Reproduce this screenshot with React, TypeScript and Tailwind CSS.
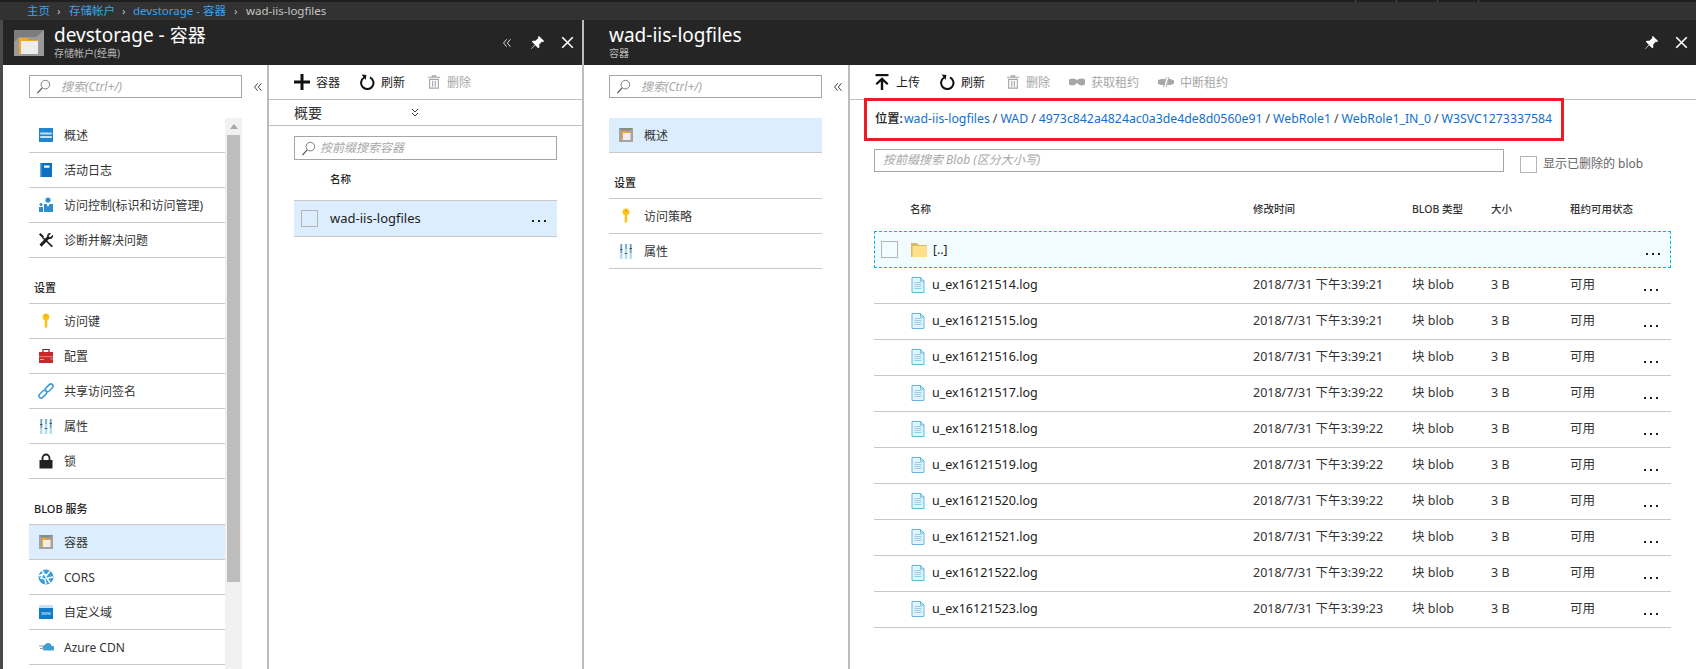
import type { ReactNode } from "react";

const files = [
  ["u_ex16121514.log", "3:39:21"],
  ["u_ex16121515.log", "3:39:21"],
  ["u_ex16121516.log", "3:39:21"],
  ["u_ex16121517.log", "3:39:22"],
  ["u_ex16121518.log", "3:39:22"],
  ["u_ex16121519.log", "3:39:22"],
  ["u_ex16121520.log", "3:39:22"],
  ["u_ex16121521.log", "3:39:22"],
  ["u_ex16121522.log", "3:39:22"],
  ["u_ex16121523.log", "3:39:23"],
];

function Svg({ children, className = "h-4 w-4" }: { children: ReactNode; className?: string }) {
  return (
    <svg viewBox="0 0 16 16" className={`flex-none ${className}`}>
      {children}
    </svg>
  );
}

function SearchIcon() {
  return (
    <Svg className="h-[15px] w-[15px]">
      <circle cx="10" cy="6" r="4.6" fill="none" stroke="#777" strokeWidth="1" />
      <path d="M6.6 9.4 1.5 15" stroke="#555" strokeWidth="1.3" />
    </Svg>
  );
}

function DoubleLeft({ color = "#444" }: { color?: string }) {
  return (
    <Svg className="h-[10px] w-[10px]">
      <path d="M7.5 2 2.5 8l5 6M13.5 2l-5 6 5 6" fill="none" stroke={color} strokeWidth="1.6" />
    </Svg>
  );
}

function PinIcon() {
  return (
    <Svg className="h-[15px] w-[15px]">
      <path d="M9.5 1 15 6.5 13.8 7.6 12.8 7 9.8 10.2 10 13 8.8 14 5.6 10.8 1.3 15 1 14.7 5.2 10.4 2 7.2 3 6 5.8 6.2 9 3.2 8.4 2.2Z" fill="#fff" />
    </Svg>
  );
}

function CloseIcon() {
  return (
    <Svg className="h-[13px] w-[13px]">
      <path d="M1.5 1.5 14.5 14.5M14.5 1.5 1.5 14.5" stroke="#fff" strokeWidth="2" />
    </Svg>
  );
}

function PlusIcon() {
  return (
    <Svg>
      <path d="M6.5 0h3v6.5H16v3H9.500v6.500h-3V9.500H0v-3h6.500Z" fill="#111" />
    </Svg>
  );
}

function RefreshIcon() {
  return (
    <Svg>
      <path d="M5.200 3.500A6.200 6.200 0 1 0 11 3.300" fill="none" stroke="#111" strokeWidth="2" />
      <path d="M2.600 0.500 7.400 1 6.600 6Z" fill="#111" />
    </Svg>
  );
}

function TrashIcon() {
  return (
    <Svg className="h-[14px] w-[14px]">
      <path d="M1 2.500h14M6 2.500V1h4v1.500" fill="none" stroke="#a6a6a6" strokeWidth="1.200" />
      <path d="M3 5h10v10H3ZM6.500 6.500v7M9.500 6.500v7" fill="none" stroke="#a6a6a6" strokeWidth="1.300" />
    </Svg>
  );
}

function UploadIcon() {
  return (
    <Svg>
      <path d="M1.500 0h13v2.200h-13Z" fill="#111" />
      <path d="M8 3.200 14.500 9.600 13 11.100 9.200 7.400V16H6.800V7.400L3 11.100 1.500 9.600Z" fill="#111" />
    </Svg>
  );
}

function LeaseIcon() {
  return (
    <Svg>
      <path d="M0 5.500 3 4.500 6.500 5 8 6.500 9.500 5 13 4.500 16 5.500V10.500L13 11.500 10.500 11 8 9 5.500 11 3 11.500 0 10.500Z" fill="#a6a6a6" />
    </Svg>
  );
}

function BreakLeaseIcon() {
  return (
    <Svg>
      <path d="M0 6 3.500 5H7V11H3.500L0 10ZM10 5H12.500L16 6.500V9.500L12.500 11H9Z" fill="#a6a6a6" />
      <path d="M5.500 13 8.500 3M8 13 11 3" stroke="#a6a6a6" strokeWidth="0.900" />
    </Svg>
  );
}

function ContainerIcon() {
  return (
    <Svg>
      <path d="M1 1h14v14H1Z" fill="#a3a3a3" />
      <path d="M1 1h14L12 3.500H3.500Z" fill="#8a8a8a" />
      <path d="M4 4h3.500l.5 1H12.500v8H4Z" fill="#f6a623" />
      <path d="M5 6h7.500v7H5Z" fill="#eeeeee" />
    </Svg>
  );
}

function OverviewIcon() {
  return (
    <Svg>
      <path d="M1 1h14v14H1Z" fill="#1f86cf" />
      <path d="M2.200 5.500h11.600v2H2.200ZM2.200 9h11.600v2H2.200Z" fill="#bfe3f7" />
    </Svg>
  );
}

function LogIcon() {
  return (
    <Svg>
      <path d="M2 1h12v14H2Z" fill="#0d6fbf" />
      <path d="M2 1h1.500v14H2Z" fill="#5ba9dd" />
      <path d="M6 3.500h5.500v2.200H6Z" fill="#fff" />
    </Svg>
  );
}

function AccessIcon() {
  return (
    <Svg>
      <circle cx="10" cy="3" r="2.600" fill="#2b8fd0" />
      <path d="M6 7h2.500l1.500 3 1.500-3H15v8H6Z" fill="#2b8fd0" />
      <circle cx="3" cy="7.500" r="1.500" fill="#2b8fd0" />
      <path d="M1 10h4v5H1Z" fill="#2b8fd0" />
    </Svg>
  );
}

function ToolsIcon() {
  return (
    <Svg>
      <path d="M2.500 1 6 4.500 4.500 6 1 2.500Z M5 5 15 14l-1.200 1.200L4 6Z" fill="#1d1d1d" />
      <path d="M14.800 2.800 12 5.500 10.500 4 13 1.200C11 .4 8.800 2 9.200 4.500L1.500 12.500 3.500 14.800 11 7c2.500.6 4.700-1.800 3.800-4.200Z" fill="#1d1d1d" />
    </Svg>
  );
}

function KeyIcon() {
  return (
    <Svg>
      <path d="M8 0.500c2.200 0 3.500 1.600 3.500 3.400 0 1.400-.9 2.700-2.200 3.200V13l-1.300 2.500L6.700 14V7.100C5.400 6.600 4.500 5.300 4.500 3.900 4.500 2.100 5.800.5 8 .5Z" fill="#fcc419" />
      <circle cx="8" cy="3" r="0.900" fill="#e69f00" />
    </Svg>
  );
}

function ToolboxIcon() {
  return (
    <Svg>
      <path d="M5 4V1.500h6V4" fill="none" stroke="#7b2020" strokeWidth="1.200" />
      <path d="M1 4h14v11H1Z" fill="#c8282c" />
      <path d="M1 8h14v1.200H1Z" fill="#e9785a" />
      <path d="M2 11h4v1H2Z" fill="#f4b183" />
      <path d="M12.500 10h2v2h-2Z" fill="#8d7fd4" />
    </Svg>
  );
}

function LinkIcon() {
  return (
    <Svg>
      <g fill="none" stroke="#3a9bd5" strokeWidth="1.500">
        <rect x="-4.500" y="-2.200" width="9" height="4.400" rx="2.200" transform="translate(4.800 11.200) rotate(-45)" />
        <rect x="-4.500" y="-2.200" width="9" height="4.400" rx="2.200" transform="translate(11.200 4.800) rotate(-45)" />
      </g>
    </Svg>
  );
}

function SlidersIcon() {
  return (
    <Svg>
      <path d="M2 1h2.500v15H2ZM6.800 1h2.500v15H6.800ZM11.500 1H14v15h-2.500Z" fill="#b3dcef" />
      <path d="M3.250 1v9M8 1v5M12.750 1v9" stroke="#4a7f9e" strokeWidth="0.900" />
      <path d="M2 6h2.500v1H2ZM6.800 10h2.500v1H6.800ZM11.500 5h2.500v1h-2.500Z" fill="#39576b" />
    </Svg>
  );
}

function LockIcon() {
  return (
    <Svg>
      <path d="M4.500 7V5a3.500 3.500 0 0 1 7 0v2" fill="none" stroke="#222" strokeWidth="1.800" />
      <path d="M1.500 7h13v8.500h-13Z" fill="#222" />
    </Svg>
  );
}

function CorsIcon() {
  return (
    <Svg>
      <circle cx="8" cy="8" r="7.500" fill="#3a9fd6" />
      <path d="M4 1.500 12 14M12 2 9 6 5 5 3 9l4 1 1 5M1 7l4-2M10 9l5-1" stroke="#fff" strokeWidth="1.500" fill="none" />
    </Svg>
  );
}

function DomainIcon() {
  return (
    <Svg>
      <path d="M1 1h14v14H1Z" fill="#0f7ccb" />
      <path d="M1 1h14v3H1Z" fill="#c7e3f5" />
      <text x="8" y="11" textAnchor="middle" fontSize="4.500" fill="#d6ecfa" fontFamily="Liberation Sans">
        www
      </text>
    </Svg>
  );
}

function CdnIcon() {
  return (
    <Svg>
      <path d="M6 11.500a3 3 0 0 1 .800-5.500 3.800 3.800 0 0 1 7 1 2.300 2.300 0 0 1 1 4.500Z" fill="#3a9fd6" />
      <path d="M1 7h6M2 9.500h5" stroke="#9a9a9a" strokeWidth="1.200" />
    </Svg>
  );
}

function FileIcon() {
  return (
    <Svg className="h-[16px] w-[16px]">
      <path d="M2 .5h8.500L14 4v11.500H2Z" fill="#e4f3fa" stroke="#63b9de" />
      <path d="M10.500.5V4H14" fill="none" stroke="#63b9de" />
      <path d="M4.500 5.500h7M4.500 7.500h7M4.500 9.500h7M4.500 11.500h7" stroke="#8cc9e4" strokeWidth="0.900" />
    </Svg>
  );
}

function FolderIcon() {
  return (
    <Svg className="h-[16px] w-[16px]">
      <path d="M0 1h6l2 2h8v12H0Z" fill="#d9b866" />
      <path d="M1.500 4H16v11H1.500Z" fill="#ffe08a" />
    </Svg>
  );
}

function Dots() {
  return (
    <span className="flex gap-[4px]">
      <i className="h-[2px] w-[2px] bg-[#222]" />
      <i className="h-[2px] w-[2px] bg-[#222]" />
      <i className="h-[2px] w-[2px] bg-[#222]" />
    </span>
  );
}

function Checkbox({ className = "" }: { className?: string }) {
  return <span className={`block h-[17px] w-[17px] flex-none border border-[#b5b5b5] ${className}`} />;
}

function BladeHeader({ title, sub, icon, actions }: { title: ReactNode; sub: string; icon?: ReactNode; actions: ReactNode }) {
  return (
    <div className="flex h-[45px] flex-none items-center bg-[#252525]">
      {icon}
      <div className="flex-1 pb-[3px] text-white">
        <div className="text-[19px] leading-[24px]">{title}</div>
        <div className="text-[10px] leading-[12px] text-[#b8b8b8]">{sub}</div>
      </div>
      {actions}
    </div>
  );
}

function SearchBox({ text }: { text: string }) {
  return (
    <div className="flex h-[23px] w-[213px] flex-none items-center border border-[#a5a5a5] pl-[6px] text-[12px] italic text-[#a8a8a8]">
      <SearchIcon />
      <span className="ml-[10px]">{text}</span>
    </div>
  );
}

function NavRow({ icon, label, active }: { icon: ReactNode; label: string; active?: boolean }) {
  return (
    <div className={`flex h-[35px] flex-none items-center gap-[10px] border-b border-[#c8c8c8] pl-[9px] text-[12px] text-[#333] ${active ? "bg-[#dceefd]" : ""}`}>
      {icon}
      <span className="pt-[2px]">{label}</span>
    </div>
  );
}

function NavHeading({ label }: { label: string }) {
  return (
    <div className="flex h-[46px] flex-none items-end border-b border-[#c8c8c8] pb-[8px] pl-[5px] text-[11px] font-medium leading-[14px] text-[#222]">
      {label}
    </div>
  );
}

function ToolButton({ icon, label, disabled, className = "" }: { icon: ReactNode; label: string; disabled?: boolean; className?: string }) {
  return (
    <div className={`flex items-center text-[12px] ${disabled ? "text-[#a6a6a6]" : "text-[#222]"} ${className}`}>
      {icon}
      <span className="ml-[6px] pt-[2px]">{label}</span>
    </div>
  );
}

function PathSep() {
  return <span className="mx-[3px] text-[#444]">/</span>;
}

export default function App() {
  return (
    <div className="flex h-[669px] w-[1696px] flex-col overflow-hidden bg-white font-['Noto_Sans','Noto_Sans_CJK_SC',sans-serif]">
      <div className="flex h-[2px] flex-none justify-end gap-[40px] bg-[#1e1e1e] pr-[217px]">
        <i className="w-px bg-[#484848]" />
        <i className="w-px bg-[#484848]" />
        <i className="w-px bg-[#484848]" />
        <i className="w-px bg-[#484848]" />
      </div>
      <div className="flex h-[18px] flex-none items-center bg-[#323232] pl-[27px] text-[11.500px] text-[#c4c4c4]">
        <span className="text-[#3fa2ea]">主页</span>
        <span className="w-[19px] pl-[7px] text-[#bbb]">›</span>
        <span className="text-[#3fa2ea]">存储帐户</span>
        <span className="w-[18px] pl-[7px] text-[#bbb]">›</span>
        <span className="text-[#3fa2ea]">devstorage - 容器</span>
        <span className="w-[20px] pl-[8px] text-[#bbb]">›</span>
        <span>wad-iis-logfiles</span>
      </div>

      <div className="flex min-h-0 flex-1">
        <div className="w-[3px] flex-none bg-[#4a4a4a]" />

        {/* first blade */}
        <div className="flex w-[581px] flex-none flex-col border-r-2 border-[#bcbcbc]">
          <BladeHeader
            title={
              <>
                devstorage - <span className="text-[18px]">容器</span>
              </>
            }
            sub="存储帐户(经典)"
            icon={
              <svg viewBox="0 0 30 26" className="ml-[11px] mr-[10px] h-[26px] w-[30px] flex-none">
                <path d="M0 0h30v26H0Z" fill="#9a9a9a" />
                <path d="M0 0h30L22 7H5L0 12Z" fill="#7d7d7d" />
                <path d="M5 8h9l1 2h9v14H5Z" fill="#f6a623" />
                <path d="M7 11h17v13H7Z" fill="#ededed" />
              </svg>
            }
            actions={
              <div className="flex items-center pr-[8px]">
                <DoubleLeft color="#ddd" />
                <span className="ml-[18px]"><PinIcon /></span>
                <span className="ml-[16px]"><CloseIcon /></span>
              </div>
            }
          />
          <div className="flex min-h-0 flex-1">
            <div className="w-[266px] flex-none overflow-hidden border-r-2 border-[#bcbcbc] pl-[26px] pt-[10px]">
              <div className="flex items-center">
                <SearchBox text="搜索(Ctrl+/)" />
                <span className="ml-[11px]"><DoubleLeft /></span>
              </div>
              <div className="mt-[20px] flex">
                <div className="flex w-[196px] flex-none flex-col">
                  <NavRow icon={<OverviewIcon />} label="概述" />
                  <NavRow icon={<LogIcon />} label="活动日志" />
                  <NavRow icon={<AccessIcon />} label="访问控制(标识和访问管理)" />
                  <NavRow icon={<ToolsIcon />} label="诊断并解决问题" />
                  <NavHeading label="设置" />
                  <NavRow icon={<KeyIcon />} label="访问键" />
                  <NavRow icon={<ToolboxIcon />} label="配置" />
                  <NavRow icon={<LinkIcon />} label="共享访问签名" />
                  <NavRow icon={<SlidersIcon />} label="属性" />
                  <NavRow icon={<LockIcon />} label="锁" />
                  <NavHeading label="BLOB 服务" />
                  <NavRow icon={<ContainerIcon />} label="容器" active />
                  <NavRow icon={<CorsIcon />} label="CORS" />
                  <NavRow icon={<DomainIcon />} label="自定义域" />
                  <NavRow icon={<CdnIcon />} label="Azure CDN" />
                </div>
                <div className="h-[560px] w-[17px] flex-none bg-[#f1f1f1]">
                  <div className="flex h-[17px] items-center justify-center">
                    <span className="h-0 w-0 border-x-[4px] border-b-[5px] border-x-transparent border-b-[#a8a8a8]" />
                  </div>
                  <div className="ml-[2px] h-[447px] w-[13px] bg-[#bdbdbd]" />
                </div>
              </div>
            </div>

            <div className="flex min-w-0 flex-1 flex-col">
              <div className="flex h-[35px] flex-none items-center border-b border-[#c0c0c0] pl-[25px]">
                <ToolButton icon={<PlusIcon />} label="容器" className="w-[65px]" />
                <ToolButton icon={<RefreshIcon />} label="刷新" className="w-[68px]" />
                <ToolButton icon={<TrashIcon />} label="删除" disabled />
              </div>
              <div className="flex h-[26px] flex-none items-center border-b border-[#c0c0c0] pl-[25px] text-[14px] text-[#333]">
                <span className="w-[116px]">概要</span>
                <svg viewBox="0 0 10 10" className="h-[10px] w-[10px]">
                  <path d="M2 1l3 3 3-3M2 5l3 3 3-3" fill="none" stroke="#444" />
                </svg>
              </div>
              <div className="ml-[25px] mt-[10px] flex h-[24px] w-[263px] items-center border border-[#a5a5a5] pl-[6px] text-[12px] italic text-[#a8a8a8]">
                <SearchIcon />
                <span className="ml-[4px]">按前缀搜索容器</span>
              </div>
              <div className="ml-[61px] flex h-[40px] items-center text-[10.500px] font-medium text-[#222]">名称</div>
              <div className="ml-[25px] flex h-[37px] w-[263px] items-center border-y border-[#c8c8c8] bg-[#dceefd] pl-[7px] pr-[11px]">
                <Checkbox />
                <span className="ml-[12px] flex-1 text-[13px] text-[#222]">wad-iis-logfiles</span>
                <span className="mt-[4px]"><Dots /></span>
              </div>
            </div>
          </div>
        </div>

        {/* second blade */}
        <div className="flex min-w-0 flex-1 flex-col">
          <div className="flex h-[45px] flex-none items-center bg-[#252525] pl-[25px]">
            <div className="flex-1 pb-[3px] text-white">
              <div className="text-[19px] leading-[24px]">wad-iis-logfiles</div>
              <div className="text-[10px] leading-[12px] text-[#b8b8b8]">容器</div>
            </div>
            <div className="flex items-center pr-[8px]">
              <PinIcon />
              <span className="ml-[16px]"><CloseIcon /></span>
            </div>
          </div>
          <div className="flex min-h-0 flex-1">
            <div className="w-[266px] flex-none border-r-2 border-[#bcbcbc] pl-[25px] pt-[10px]">
              <div className="flex items-center">
                <SearchBox text="搜索(Ctrl+/)" />
                <span className="ml-[11px]"><DoubleLeft /></span>
              </div>
              <div className="mt-[20px] flex w-[213px] flex-col">
                <NavRow icon={<ContainerIcon />} label="概述" active />
                <NavHeading label="设置" />
                <NavRow icon={<KeyIcon />} label="访问策略" />
                <NavRow icon={<SlidersIcon />} label="属性" />
              </div>
            </div>

            <div className="min-w-0 flex-1">
              <div className="flex h-[35px] items-center border-b border-[#c0c0c0] pl-[24px]">
                <ToolButton icon={<UploadIcon />} label="上传" className="w-[65px]" />
                <ToolButton icon={<RefreshIcon />} label="刷新" className="w-[67px]" />
                <ToolButton icon={<TrashIcon />} label="删除" disabled className="w-[63px]" />
                <ToolButton icon={<LeaseIcon />} label="获取租约" disabled className="w-[89px]" />
                <ToolButton icon={<BreakLeaseIcon />} label="中断租约" disabled />
              </div>
              <div className="-mt-[2px] ml-[14px] flex h-[43px] w-[700px] items-center whitespace-nowrap border-[3px] border-[#ed1c24] bg-white pl-[8px] text-[12.300px]">
                <span className="font-medium text-[#222]">位置:</span>
                <span className="ml-[1px] text-[#0f6fd1]">wad-iis-logfiles</span>
                <PathSep />
                <span className="text-[#0f6fd1]">WAD</span>
                <PathSep />
                <span className="text-[#0f6fd1]">4973c842a4824ac0a3de4de8d0560e91</span>
                <PathSep />
                <span className="text-[#0f6fd1]">WebRole1</span>
                <PathSep />
                <span className="text-[#0f6fd1]">WebRole1_IN_0</span>
                <PathSep />
                <span className="text-[#0f6fd1]">W3SVC1273337584</span>
              </div>
              <div className="ml-[24px] mt-[8px] flex items-start">
                <div className="flex h-[23px] w-[630px] items-center border border-[#a5a5a5] pb-[2px] pl-[8px] text-[12px] italic text-[#a8a8a8]">
                  按前缀搜索 Blob (区分大小写)
                </div>
                <div className="ml-[16px] mt-[6px] flex items-center text-[12px] text-[#666]">
                  <Checkbox />
                  <span className="ml-[6px]">显示已删除的 blob</span>
                </div>
              </div>
              <div className="ml-[24px] mt-[16px] w-[797px]">
                <div className="grid h-[42px] grid-cols-[36px_343px_159px_79px_79px_74px_1fr] items-center text-[10.500px] font-medium text-[#333]">
                  <span />
                  <span>名称</span>
                  <span>修改时间</span>
                  <span>BLOB 类型</span>
                  <span>大小</span>
                  <span>租约可用状态</span>
                </div>
                <div className="grid h-[37px] grid-cols-[36px_343px_1fr] items-center border border-dashed border-[#00b4ef] bg-[#f2fbfe]">
                  <Checkbox className="ml-[6px]" />
                  <div className="flex items-center gap-[6px] text-[12px] text-[#222]">
                    <FolderIcon />
                    <span>[..]</span>
                  </div>
                  <span className="mt-[8px] justify-self-end pr-[10px]"><Dots /></span>
                </div>
                {files.map(([name, time]) => (
                  <div
                    key={name}
                    className="grid h-[36px] grid-cols-[36px_343px_159px_79px_79px_74px_1fr] items-center border-b border-[#c8c8c8] pb-[1px] text-[12.500px] text-[#333]"
                  >
                    <span />
                    <div className="flex items-center gap-[6px] text-[#222]">
                      <FileIcon />
                      <span>{name}</span>
                    </div>
                    <span>2018/7/31 下午{time}</span>
                    <span>块 blob</span>
                    <span>3 B</span>
                    <span>可用</span>
                    <span className="mt-[9px]"><Dots /></span>
                  </div>
                ))}
              </div>
            </div>
          </div>
        </div>
      </div>
    </div>
  );
}
